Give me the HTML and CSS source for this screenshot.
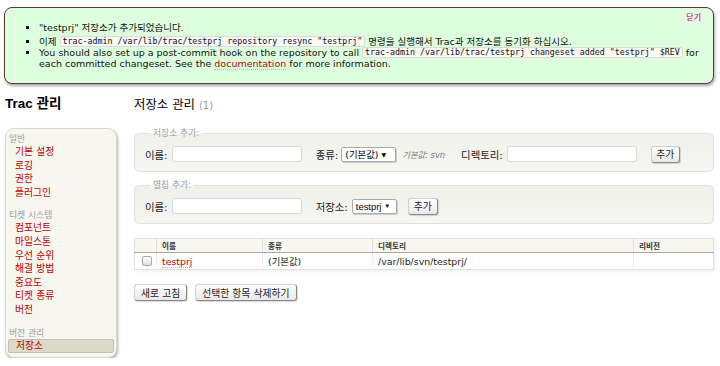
FILE: index.html
```html
<!DOCTYPE html>
<html lang="ko">
<head>
<meta charset="utf-8">
<title>저장소 관리</title>
<link rel="stylesheet" href="styles.css">
</head>
<body>
<div class="notice">
  <span class="close">닫기</span>
  <ul>
    <li class="first">"testprj" 저장소가 추가되었습니다.</li>
    <li>이제 <code>trac-admin /var/lib/trac/testprj repository resync "testprj"</code> 명령을 실행해서 Trac과 저장소를 동기화 하십시오.</li>
    <li>You should also set up a post-commit hook on the repository to call <code>trac-admin /var/lib/trac/testprj changeset added "testprj" $REV</code> for each committed changeset. See the <a class="doc" href="#">documentation</a> for more information.</li>
  </ul>
</div>
<div class="page">
  <div class="side">
    <h1>Trac 관리</h1>
    <div class="tabs">
      <div class="grp">일반</div>
      <a href="#">기본 설정</a>
      <a href="#">로깅</a>
      <a href="#">권한</a>
      <a href="#">플러그인</a>
      <div class="grp gap">티켓 시스템</div>
      <a href="#">컴포넌트</a>
      <a href="#">마일스톤</a>
      <a href="#">우선 순위</a>
      <a href="#">해결 방법</a>
      <a href="#">중요도</a>
      <a href="#">티켓 종류</a>
      <a href="#">버전</a>
      <div class="grp gap">버전 관리</div>
      <a href="#" class="active">저장소</a>
    </div>
  </div>
  <div class="main">
    <h2>저장소 관리 <span class="cnt">(1)</span></h2>
    <fieldset class="fs">
      <legend>저장소 추가:</legend>
      <div class="row">
        <label>이름:</label>
        <span class="inp"></span>
        <label class="l2">종류:</label>
        <span class="sel s1">(기본값) <i class="arr">▼</i></span>
        <span class="hint">기본값: svn</span>
        <label class="l3">디렉토리:</label>
        <span class="inp"></span>
        <span class="btn b-add">추가</span>
      </div>
    </fieldset>
    <fieldset class="fs fs2">
      <legend>별칭 추가:</legend>
      <div class="row">
        <label>이름:</label>
        <span class="inp"></span>
        <label class="l2">저장소:</label>
        <span class="sel s2">testprj <i class="arr">▼</i></span>
        <span class="btn b-add2">추가</span>
      </div>
    </fieldset>
    <table class="list">
      <thead>
        <tr><th class="c0"></th><th class="c1">이름</th><th class="c2">종류</th><th class="c3">디렉토리</th><th class="c4">리비전</th></tr>
      </thead>
      <tbody>
        <tr><td class="c0"><span class="chk"></span></td><td><a href="#" class="repo">testprj</a></td><td>(기본값)</td><td>/var/lib/svn/testprj/</td><td></td></tr>
      </tbody>
    </table>
    <div class="btns">
      <span class="btn">새로 고침</span>
      <span class="btn">선택한 항목 삭제하기</span>
    </div>
  </div>
</div>
</body>
</html>
```
FILE: styles.css
```css
* { box-sizing: border-box; }
body {
  margin: 0;
  background: #fff;
  color: #000;
  font-family: "DejaVu Sans", "Noto Sans CJK KR", sans-serif;
  font-size: 9px;
}
a { color: #b00; text-decoration: none; }

.notice {
  position: relative;
  margin: 7px 6px 0 4px;
  height: 77px;
  background: #dfd;
  border: 1px solid #5a3a36;
  border-radius: 8px;
  box-shadow: 1px 2px 3px rgba(0,0,0,0.35);
  padding: 14px 10px 0 0;
}
.close {
  position: absolute;
  top: 4px;
  right: 8px;
  font-size: 8px;
  line-height: 11px;
  color: #8b1a1a;
  background: #eef2ea;
  border-radius: 6px;
  padding: 0 4px;
}
.notice ul {
  margin: 0;
  padding-left: 34px;
  list-style: square;
}
.notice li {
  font-size: 9.5px;
  line-height: 11px;
  color: #111;
}
.notice li.first { margin-bottom: 3px; }
.notice code {
  display: inline-block;
  vertical-align: top;
  font-family: "DejaVu Sans Mono", monospace;
  font-size: 8.3px;
  line-height: 9px;
  background: #f8f8f6;
  border: 1px solid #dcdcd6;
  border-radius: 2px;
  padding: 0 2px;
}
.doc { border-bottom: 1px dotted #bbb; }

.page {
  display: flex;
  margin-top: 12px;
}
.side {
  width: 112px;
  margin-left: 5px;
  flex: none;
}
.side h1 {
  margin: 0;
  font-family: "Liberation Sans", "Noto Sans CJK KR", sans-serif;
  font-size: 13.5px;
  font-weight: bold;
  line-height: 16px;
  height: 16px;
}
.tabs {
  margin-top: 16px;
  height: 230px;
  background: #f7f7f0;
  border: 1px solid #d7d7d0;
  border-radius: 9px;
  box-shadow: 1px 2px 3px rgba(0,0,0,0.3);
  padding: 4px 2px 0 2px;
  display: flex;
  flex-direction: column;
}
.grp {
  color: #999;
  font-size: 8.8px;
  line-height: 12px;
  padding-left: 1px;
}
.grp.gap { margin-top: 10px; }
.tabs a {
  display: block;
  font-size: 9.8px;
  line-height: 13.6px;
  padding-left: 7px;
  color: #b00;
}
.tabs a.active {
  background: #dcdac8;
  border: 1px solid #c4c2b0;
  border-radius: 2px;
  color: #b00;
  line-height: 12px;
}

.main {
  margin-left: 17px;
  width: 580px;
  flex: none;
}
.main h2 {
  margin: 0;
  font-weight: normal;
  font-size: 12.4px;
  line-height: 16px;
  height: 16px;
  margin-top: 1px;
}
.cnt { color: #999; font-size: 10px; }

.fs {
  margin: 14px 0 0 0;
  padding: 7px 10px 9px 10px;
  border: 1px solid #e2e2dc;
  border-radius: 5px;
  background: linear-gradient(#f1f1ec, #f5f5f1);
  min-width: 0;
}
.fs2 { margin-top: 7px; }
.fs legend {
  margin-left: 6px;
  padding: 0 2px;
  color: #999;
  font-size: 8.8px;
  line-height: 12px;
}
.row {
  display: flex;
  align-items: center;
  height: 16px;
  white-space: nowrap;
}
.row label {
  font-size: 10.4px;
  color: #222;
}
.inp {
  display: block;
  width: 130px;
  height: 16px;
  margin-left: 4px;
  background: #fff;
  border: 1px solid #d8d8d8;
  border-radius: 3px;
}
.l2 { margin-left: 14px; }
.sel {
  display: flex;
  align-items: center;
  height: 15px;
  background: #fff;
  border: 1px solid #aaa;
  border-radius: 2px;
  padding: 0 3px;
  font-size: 9.4px;
  box-shadow: 1px 1px 0 #ccc;
}
.s1 { width: 55px; margin-left: 3px; }
.s2 { width: 45px; margin-left: 4px; font-family: "Liberation Sans", sans-serif; }
.arr { font-style: normal; font-size: 6px; margin-left: 3px; }
.hint {
  margin-left: 6px;
  font-size: 8.3px;
  color: #777;
  font-style: italic;
}
.l3 { margin-left: 16px; }
.btn {
  display: inline-flex;
  align-items: center;
  justify-content: center;
  white-space: nowrap;
  height: 17px;
  padding: 0 5px;
  font-size: 9.8px;
  color: #222;
  background: linear-gradient(#fff, #e8e8e6);
  border: 1px solid #cfcfcf;
  border-right-color: #888;
  border-bottom-color: #888;
  border-radius: 3px;
  box-shadow: 1px 1px 1px rgba(0,0,0,0.15);
}
.b-add { margin-left: 14px; width: 29px; padding: 0; }
.b-add2 { margin-left: 11px; width: 30px; padding: 0; }

.list {
  margin-top: 14px;
  width: 580px;
  border-collapse: collapse;
  border: 1px solid #e2e2dc;
  box-shadow: 1px 1px 3px rgba(0,0,0,0.08);
}
.list th {
  background: #f7f7f0;
  border-bottom: 1px solid #a8a8a0;
  height: 14px;
  padding: 0 0 0 5px;
  text-align: left;
  font-size: 7.6px;
  font-weight: bold;
  color: #333;
}
.list th + th { border-left: 1px solid #e0e0da; }
.list td {
  height: 17px;
  padding: 0 0 0 5px;
  font-size: 9.4px;
  color: #222;
}
.list td + td { border-left: 1px solid #eee; }
.c0 { width: 22px; }
.c1 { width: 106px; }
.c2 { width: 110px; }
.c3 { width: 261px; }
.chk {
  display: block;
  width: 10px;
  height: 10px;
  margin-left: 2px;
  border: 1px solid #aaa;
  border-radius: 2px;
  background: linear-gradient(#fff, #ddd);
}
.repo { border-bottom: 1px dotted #bbb; color: #b00; }

.btns {
  display: flex;
  gap: 8px;
  margin-top: 14px;
}
.btns .btn { height: 17px; padding: 0 6px; }
```
